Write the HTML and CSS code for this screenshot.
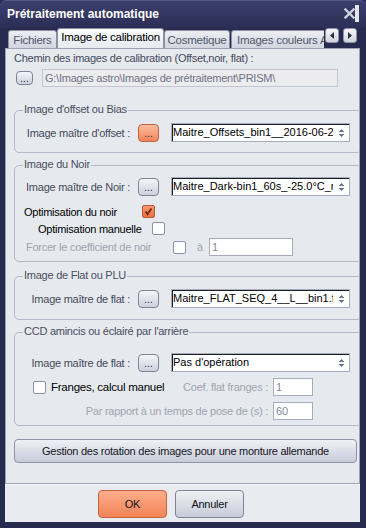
FILE: index.html
```html
<!DOCTYPE html>
<html lang="fr">
<head>
    <meta charset="UTF-8">
    <meta name="viewport" content="width=device-width, initial-scale=1.0">
    <title>Prétraitement automatique</title>
    <link rel="stylesheet" href="styles.css">
</head>
<body>
    <div class="window">
        <div class="titlebar">
            <span class="title">Prétraitement automatique</span>
            <svg class="close" width="11" height="11" viewBox="0 0 11 11">
                <path d="M1.5 1.5 L9.5 9.5 M9.5 1.5 L1.5 9.5" stroke="#cfd1dc" stroke-width="2.4" stroke-linecap="square"/>
            </svg>
            <span class="close-edge"></span>
        </div>

        <div class="tabstrip">
            <div class="tabs">
                <div class="tab tab-files">Fichiers</div>
                <div class="tab tab-active">Image de calibration</div>
                <div class="tab tab-cosmetic">Cosmetique</div>
                <div class="tab tab-colors">Images couleurs AFC</div>
            </div>
            <div class="tab-scroll">
                <span class="scroll-btn">
                    <svg width="4" height="7" viewBox="0 0 4 7"><path d="M4 0 L0 3.5 L4 7 Z" fill="#2c2f3e"/></svg>
                </span>
                <span class="scroll-btn">
                    <svg width="4" height="7" viewBox="0 0 4 7"><path d="M0 0 L4 3.5 L0 7 Z" fill="#2c2f3e"/></svg>
                </span>
            </div>
        </div>

        <div class="client">
            <div class="panel">
                <div class="path-label">Chemin des images de calibration (Offset,noir, flat) :</div>
                <div class="path-row">
                    <span class="dots dots-small">...</span>
                    <div class="path-field">G:\Images astro\Images de prétraitement\PRISM\</div>
                </div>

                <!-- offset -->
                <div class="group group-offset">
                    <div class="group-title">Image d'offset ou Bias</div>
                    <div class="file-row">
                        <span class="file-label">Image maître d'offset :</span>
                        <span class="dots dots-orange">...</span>
                        <div class="combo">
                            <span class="combo-text">Maitre_Offsets_bin1__2016-06-29_15-10-00.fit</span>
                            <span class="combo-spin">
                                <svg width="7" height="10" viewBox="0 0 7 10"><path d="M0.5 4 L3.5 1 L6.5 4 Z M0.5 6 L3.5 9 L6.5 6 Z" fill="#6f7385"/></svg>
                            </span>
                        </div>
                    </div>
                </div>

                <!-- noir -->
                <div class="group group-dark">
                    <div class="group-title">Image du Noir</div>
                    <div class="file-row">
                        <span class="file-label">Image maître de Noir :</span>
                        <span class="dots">...</span>
                        <div class="combo">
                            <span class="combo-text">Maitre_Dark-bin1_60s_-25.0°C_n.fit</span>
                            <span class="combo-spin">
                                <svg width="7" height="10" viewBox="0 0 7 10"><path d="M0.5 4 L3.5 1 L6.5 4 Z M0.5 6 L3.5 9 L6.5 6 Z" fill="#6f7385"/></svg>
                            </span>
                        </div>
                    </div>
                    <div class="opt-row opt-dark">
                        <span class="opt-label">Optimisation du noir</span>
                        <span class="check check-on">
                            <svg width="11" height="11" viewBox="0 0 11 11"><path d="M2.5 5.5 L4.5 8 L8.5 2.5" stroke="#7a2a12" stroke-width="2" fill="none"/></svg>
                        </span>
                    </div>
                    <div class="opt-row opt-manual">
                        <span class="opt-label">Optimisation manuelle</span>
                        <span class="check"></span>
                    </div>
                    <div class="opt-row opt-force">
                        <span class="opt-label disabled">Forcer le coefficient de noir</span>
                        <span class="check"></span>
                        <span class="a-label disabled">à</span>
                        <div class="num num-coef">1</div>
                    </div>
                </div>

                <!-- flat -->
                <div class="group group-flat">
                    <div class="group-title">Image de Flat ou PLU</div>
                    <div class="file-row">
                        <span class="file-label">Image maître de flat :</span>
                        <span class="dots">...</span>
                        <div class="combo">
                            <span class="combo-text">Maitre_FLAT_SEQ_4__L__bin1.fit</span>
                            <span class="combo-spin">
                                <svg width="7" height="10" viewBox="0 0 7 10"><path d="M0.5 4 L3.5 1 L6.5 4 Z M0.5 6 L3.5 9 L6.5 6 Z" fill="#6f7385"/></svg>
                            </span>
                        </div>
                    </div>
                </div>

                <!-- ccd aminci -->
                <div class="group group-ccd">
                    <div class="group-title">CCD amincis ou éclairé par l'arrière</div>
                    <div class="file-row">
                        <span class="file-label">Image maître de flat :</span>
                        <span class="dots">...</span>
                        <div class="combo">
                            <span class="combo-text">Pas d'opération</span>
                            <span class="combo-spin">
                                <svg width="7" height="10" viewBox="0 0 7 10"><path d="M0.5 4 L3.5 1 L6.5 4 Z M0.5 6 L3.5 9 L6.5 6 Z" fill="#6f7385"/></svg>
                            </span>
                        </div>
                    </div>
                    <div class="fringe-row">
                        <div class="fringe-left">
                            <span class="check"></span>
                            <span class="fringe-label">Franges, calcul manuel</span>
                        </div>
                        <span class="coef-label disabled">Coef. flat franges :</span>
                        <div class="num num-small">1</div>
                    </div>
                    <div class="fringe-row">
                        <span class="pose-label disabled">Par rapport à un temps de pose de (s) :</span>
                        <div class="num num-small">60</div>
                    </div>
                </div>

                <div class="big-btn">Gestion des rotation des images pour une monture allemande</div>
            </div>

            <div class="footer">
                <span class="btn btn-ok">OK</span>
                <span class="btn">Annuler</span>
            </div>
        </div>
    </div>
</body>
</html>
```

FILE: styles.css
```css
* {
    margin: 0;
    padding: 0;
    box-sizing: border-box;
}

body {
    background-color: #272b50;
    font-family: 'Liberation Sans', Arial, sans-serif;
    font-size: 11px;
    letter-spacing: -0.25px;
    color: #45495b;
}

.window {
    width: 366px;
    height: 528px;
    display: flex;
    flex-direction: column;
    background-color: #272b50;
}

/* title bar */
.titlebar {
    height: 28px;
    flex: none;
    display: flex;
    align-items: center;
    padding-left: 7px;
    background: linear-gradient(#3b3f6c, #2b2f57);
    border-top: 1px solid #555a86;
    border-radius: 6px 6px 0 0;
}

.title {
    flex: 1;
    color: #ffffff;
    font-size: 12px;
    font-weight: bold;
    letter-spacing: 0;
    margin-top: -1px;
}

.close {
    margin-top: -2px;
}

.close-edge {
    align-self: flex-start;
    width: 4px;
    height: 17px;
    margin: 4px 7px 0 0;
    background-color: #e4e6ee;
}

/* tabs */
.tabstrip {
    height: 20px;
    flex: none;
    display: flex;
    align-items: flex-end;
    padding-left: 8px;
}

.tabs {
    flex: 1;
    display: flex;
    align-items: flex-end;
    overflow: hidden;
    height: 21px;
    margin-bottom: -1px;
}

.tab {
    flex: none;
    height: 19px;
    border: 1px solid #8a8fa4;
    border-bottom: none;
    border-radius: 3px 3px 0 0;
    background: linear-gradient(#eceef3, #d2d5df);
    color: #50556a;
    font-size: 11.5px;
    line-height: 17px;
    padding-top: 1px;
    text-align: center;
    white-space: nowrap;
    border-bottom: 1px solid #9ca1b4;
}

.tab-files {
    width: 49px;
}

.tab-active {
    width: 107px;
    height: 21px;
    background: linear-gradient(#fbfbfd, #e6e9ee);
    color: #000000;
    padding-top: 0;
    border-bottom: none;
}

.tab-cosmetic {
    width: 66px;
    margin-right: 1px;
}

.tab-colors {
    width: 110px;
    text-align: left;
    padding-left: 5px;
}

.tab-scroll {
    flex: none;
    align-self: flex-start;
    display: flex;
    gap: 4px;
    margin: 0 9px 0 1px;
}

.scroll-btn {
    width: 14px;
    height: 15px;
    border: 1px solid #8f94a8;
    border-radius: 3px;
    background: linear-gradient(#f5f6f9, #d0d3de);
    display: flex;
    align-items: center;
    justify-content: center;
}

/* client area */
.client {
    flex: 1;
    margin: 0 6px 6px 5px;
    display: flex;
    flex-direction: column;
    background-color: #e9ebf0;
}

.panel {
    flex: none;
    height: 436px;
    border: 1px solid #9ca1b4;
    background-color: #e6e9ee;
    padding: 3px 0 0 8px;
    overflow: hidden;
}

.path-label {
    line-height: 13px;
}

.path-row {
    display: flex;
    align-items: center;
    height: 18px;
    margin-top: 4px;
}

.path-field {
    width: 296px;
    height: 18px;
    margin-left: 9px;
    background-color: #ececef;
    border: 1px solid #c3c6d1;
    color: #6f7285;
    padding-left: 2px;
    line-height: 16px;
    white-space: nowrap;
    overflow: hidden;
}

/* buttons with dots */
.dots {
    flex: none;
    width: 21px;
    height: 18px;
    margin-left: 8px;
    border: 1px solid #7e8399;
    border-radius: 4px;
    background: linear-gradient(#f5f6f9, #cdd0dc);
    color: #222533;
    font-size: 10px;
    letter-spacing: 0;
    line-height: 18px;
    text-align: center;
}

.dots-small {
    width: 17px;
    height: 14px;
    margin-left: 2px;
    line-height: 14px;
}

.dots-orange {
    background: linear-gradient(#fdbc9d, #f2845a);
    border-color: #c4633e;
}

/* group boxes */
.group {
    margin-right: -3px;
    border: 1px solid #b4b8c7;
    border-radius: 5px;
}

.group-title {
    display: table;
    margin: -8px 0 0 8px;
    padding: 0 1px;
    line-height: 13px;
    background-color: #e6e9ee;
    color: #4a4e62;
}

.group-offset {
    margin-top: 23px;
    padding-bottom: 10px;
}

.group-dark {
    margin-top: 12px;
    padding-bottom: 5px;
}

.group-flat {
    margin-top: 14px;
    padding-bottom: 11px;
}

.group-ccd {
    margin-top: 12px;
    padding-bottom: 5px;
}

.file-row {
    display: flex;
    align-items: center;
    height: 19px;
    margin-top: 7px;
}

.group-dark .file-row {
    margin-top: 6px;
}

.group-ccd .file-row {
    margin-top: 15px;
}

.file-label {
    flex: none;
    width: 115px;
    text-align: right;
    white-space: nowrap;
}

.combo {
    flex: none;
    width: 179px;
    height: 19px;
    margin-left: 12px;
    display: flex;
    align-items: center;
    background-color: #ffffff;
    border: 1px solid #a9adbb;
    box-shadow: inset 1px 1px 0 #1e1f26;
}

.combo-text {
    flex: 1;
    overflow: hidden;
    white-space: nowrap;
    color: #000000;
    letter-spacing: 0;
    padding-left: 1px;
    line-height: 17px;
}

.combo-spin {
    flex: none;
    width: 16px;
    display: flex;
    justify-content: center;
}

/* check rows */
.opt-row {
    display: flex;
    align-items: center;
    height: 13px;
}

.opt-label {
    flex: none;
    color: #000000;
    white-space: nowrap;
}

.opt-dark {
    margin-top: 9px;
}

.opt-dark .opt-label {
    margin-left: 9px;
    width: 118px;
}

.opt-manual {
    margin-top: 4px;
}

.opt-manual .opt-label {
    margin-left: 23px;
    width: 114px;
}

.opt-force {
    height: 18px;
    margin-top: 3px;
}

.opt-force .opt-label {
    margin-left: 11px;
    width: 147px;
}

.disabled {
    color: #a1a4b0;
}

.opt-label.disabled {
    color: #a1a4b0;
}

.check {
    flex: none;
    width: 13px;
    height: 13px;
    border: 1px solid #8d92a6;
    border-radius: 2px;
    background-color: #ffffff;
    display: flex;
    align-items: center;
    justify-content: center;
}

.check-on {
    background: linear-gradient(#f79a70, #e9703f);
    border-color: #b65934;
}

.a-label {
    flex: none;
    width: 12px;
    margin-left: 11px;
}

.num {
    flex: none;
    height: 18px;
    border: 1px solid #a8acba;
    background-color: #ffffff;
    color: #85889a;
    padding-left: 2px;
    line-height: 16px;
    letter-spacing: 0;
}

.num-coef {
    width: 84px;
}

.num-small {
    width: 40px;
    margin-left: 5px;
}

.fringe-row {
    display: flex;
    align-items: center;
    height: 18px;
    margin-top: 6px;
}

.fringe-left {
    flex: none;
    width: 165px;
    display: flex;
    align-items: center;
    padding-left: 18px;
}

.fringe-label {
    margin-left: 5px;
    color: #000000;
    font-size: 11.5px;
    white-space: nowrap;
}

.coef-label {
    flex: none;
    width: 88px;
    text-align: right;
    white-space: nowrap;
}

.pose-label {
    flex: none;
    width: 253px;
    text-align: right;
    white-space: nowrap;
}

.big-btn {
    width: 343px;
    height: 24px;
    margin-top: 13px;
    border: 1px solid #8d92a6;
    border-radius: 4px;
    background: linear-gradient(#f0f1f6, #c7cbd9);
    color: #15161c;
    line-height: 22px;
    text-align: center;
    white-space: nowrap;
}

/* bottom buttons */
.footer {
    flex: 1;
    display: flex;
    align-items: center;
    gap: 8px;
    padding-left: 93px;
    border-top: 1px solid #f7f8fa;
}

.btn {
    width: 69px;
    height: 28px;
    border: 1px solid #7f8499;
    border-radius: 4px;
    background: linear-gradient(#eff0f5, #c8cbd9);
    color: #111218;
    line-height: 26px;
    text-align: center;
}

.btn-ok {
    background: linear-gradient(#fcae8c, #f28457);
    border-color: #c4643f;
}
```
